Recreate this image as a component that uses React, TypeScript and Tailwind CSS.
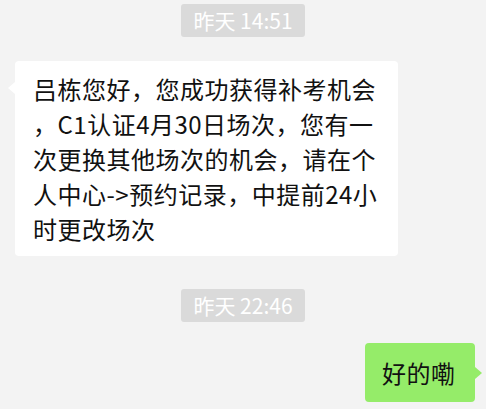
const lines = [
    "吕栋您好，您成功获得补考机会",
    "，C1认证4月30日场次，您有一",
    "次更换其他场次的机会，请在个",
    "人中心->预约记录，中提前24小",
    "时更改场次",
];

const TimeTag = ({ text }: { text: string }) => (
    <div className="flex justify-center">
        <div className="h-[33px] w-[124px] rounded-[3px] bg-[#dadada] text-white text-[21px] leading-[33px] text-center">
            {text}
        </div>
    </div>
);

const App = () => {
    return (
        <div
            className="w-[486px] h-[409px] bg-[#f3f3f3] flex flex-col pt-[4px] overflow-hidden"
            style={{ fontFamily: '"Noto Sans CJK SC", "Noto Sans", sans-serif' }}
        >
            <TimeTag text="昨天 14:51" />

            {/* received message */}
            <div className="mt-[24px] pl-[15px] flex">
                <div className="relative w-[383px] rounded-[4px] bg-white pl-[18px] pr-[10px] py-[10px] text-[24px] leading-[35px] text-[#111]">
                    <span className="absolute left-[-7px] top-[21px] w-0 h-0 border-y-[6px] border-y-transparent border-r-[7px] border-r-white" />
                    {lines.map((line, i) => (
                        <div key={i} className="whitespace-nowrap tracking-[0.5px]">{line}</div>
                    ))}
                </div>
            </div>

            <div className="mt-[33px]">
                <TimeTag text="昨天 22:46" />
            </div>

            {/* sent message */}
            <div className="mt-[21px] pr-[11px] flex justify-end">
                <div className="relative h-[59px] w-[110px] rounded-[4px] bg-[#95ec69] pl-[17px] text-[24px] leading-[59px] text-[#111] tracking-[0.5px]">
                    <span className="absolute right-[-7px] top-[24px] w-0 h-0 border-y-[6px] border-y-transparent border-l-[7px] border-l-[#95ec69]" />
                    好的嘞
                </div>
            </div>
        </div>
    );
};

export default App;
